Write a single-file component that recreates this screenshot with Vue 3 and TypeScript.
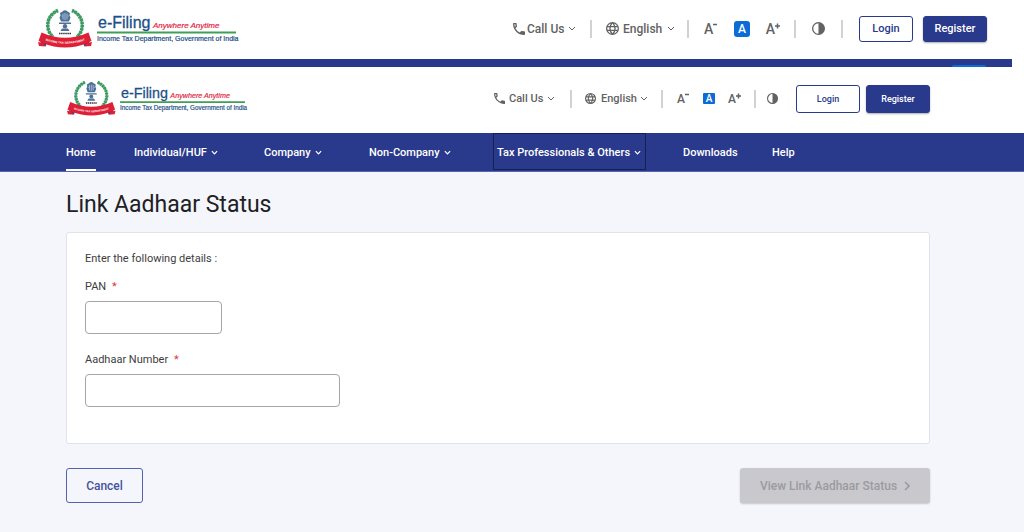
<script setup lang="ts">
import { ref } from 'vue'

interface Masthead {
  id: string
  variant: 'large' | 'compact'
}

interface NavItem {
  label: string
  menu?: boolean
  active?: boolean
  focused?: boolean
}

const mastheads: Masthead[] = [
  { id: 'top', variant: 'large' },
  { id: 'main', variant: 'compact' },
]

const navItems: NavItem[] = [
  { label: 'Home', active: true },
  { label: 'Individual/HUF', menu: true },
  { label: 'Company', menu: true },
  { label: 'Non-Company', menu: true },
  { label: 'Tax Professionals & Others', menu: true, focused: true },
  { label: 'Downloads' },
  { label: 'Help' },
]

const pan = ref('')
const aadhaar = ref('')
</script>

<template>
  <div class="page">
    <template v-for="m in mastheads" :key="m.id">
      <header class="masthead" :class="m.variant">
        <a class="logo" href="#" aria-label="e-Filing home">
          <svg viewBox="0 0 198 39">
            <g fill="none" stroke="#3f9a63">
              <path d="M20 1.5A16.500 16 0 0 0 15 28" stroke-width="3.600" stroke-dasharray="2.400 .7" />
              <path d="M34 1.500A16.500 16 0 0 1 39 28" stroke-width="3.600" stroke-dasharray="2.400 .7" />
              <path d="M20 1.500A16.500 16 0 0 0 15 28M34 1.500A16.500 16 0 0 1 39 28" stroke-width="1.400" />
            </g>
            <g fill="#4d6f98">
              <path d="M24.500 2.500q2.500-2.500 5 0l2.500 1.500-.5 2.500 1 2-1.500 4h-8l-1.500-4 1-2-.5-2.500z" />
              <path d="M21 13.500h12v1.500H21zM24 19.500h6l1.500 2.500h-9z" />
              <circle cx="27" cy="17.300" r="2.200" />
            </g>
            <path d="M25 4.500v6M27 4v7M29 4.500v6M23.500 7h1M30 7h1" stroke="#d5e0eb" stroke-width=".7" />
            <path d="M21 24.500h12" stroke="#333" stroke-width="1.500" stroke-dasharray="1.500 .6" />
            <path d="M2 29l7 3-1 5-5-1zM52 29l-7 3 1 5 5-1z" fill="#234b92" />
            <path d="M3.500 23.500Q27 34 50.500 23.500L53.500 32q-2 .5-4 2Q27 43 4.500 34 2.500 32.500.5 32z" fill="#df1f36" />
            <path d="M0 33l5 1 3 3.500-7-.5zM54 33l-5 1-3 3.500 7-.5z" fill="#df1f36" />
            <path :id="`ribbon-${m.id}`" d="M4.500 30.500Q27 39 50 30.500" fill="none" />
            <text class="ribbon"><textPath :href="`#ribbon-${m.id}`" startOffset="50%" text-anchor="middle">INCOME TAX DEPARTMENT</textPath></text>
            <text class="brand" x="60" y="19">e-Filing</text>
            <text class="motto" x="115" y="19">Anywhere Anytime</text>
            <path d="M59 23.500h139" stroke="#3f9f55" stroke-width="1.800" />
            <text class="department" x="59" y="32">Income Tax Department, Government of India</text>
          </svg>
        </a>

        <div class="tools">
          <div class="cell call">
            <button type="button" class="plain">
              <svg class="icon" viewBox="3 3 18 18"><path fill="currentColor" d="M6.540 5c.06.89.21 1.760.45 2.590L5.790 8.790C5.380 7.590 5.120 6.320 5.030 5zM20 15.500c-1.250 0-2.450-.2-3.570-.57a1 1 0 0 0-1.020.24l-2.200 2.200a15.050 15.050 0 0 1-6.590-6.590l2.200-2.200a1 1 0 0 0 .25-1.020A11.400 11.400 0 0 1 8.500 4a1 1 0 0 0-1-1H4a1 1 0 0 0-1 1c0 9.390 7.610 17 17 17a1 1 0 0 0 1-1v-3.500a1 1 0 0 0-1-1z" /></svg>
              <span class="caption">Call Us</span>
              <svg class="chevron" viewBox="0 0 8 5"><path d="M1 1l3 3 3-3" /></svg>
            </button>
          </div>
          <div class="cell language">
            <svg class="icon" viewBox="2 2 20 20"><path fill="none" stroke="currentColor" stroke-width="2" d="M12 3a9 9 0 1 0 0 18 9 9 0 0 0 0-18zM12 3c-5.300 5-5.300 13 0 18 5.300-5 5.300-13 0-18zM4 9h16M4 15h16" /></svg>
            <select class="caption" aria-label="Language"><option>English</option></select>
            <svg class="chevron" viewBox="0 0 8 5"><path d="M1 1l3 3 3-3" /></svg>
          </div>
          <div class="cell sizes">
            <button type="button" class="plain letter" aria-label="Decrease text size">A<svg viewBox="0 0 5 12"><path d="M0 1.500h4" /></svg></button>
            <button type="button" class="plain current" aria-label="Normal text size">A</button>
            <button type="button" class="plain letter" aria-label="Increase text size">A<svg viewBox="0 0 5 12"><path d="M0 3h5M2.500 .5v5" /></svg></button>
          </div>
          <div class="cell contrast">
            <button type="button" class="plain" aria-label="Contrast">
              <svg class="icon" viewBox="2 2 20 20"><circle cx="12" cy="12" r="9" fill="none" stroke="currentColor" stroke-width="2" /><path fill="currentColor" d="M12 3a9 9 0 0 1 0 18z" /></svg>
            </button>
          </div>
          <div class="cell account">
            <button type="button" class="login">Login</button>
            <button type="button" class="register">Register</button>
          </div>
        </div>
      </header>
      <div v-if="m.variant === 'large'" class="strip"><span></span></div>
    </template>

    <nav class="nav">
      <a v-for="item in navItems" :key="item.label" href="#" :class="{ active: item.active, focused: item.focused }">
        {{ item.label }}
        <svg v-if="item.menu" class="chevron" viewBox="0 0 8 5"><path d="M1 1l3 3 3-3" /></svg>
      </a>
    </nav>

    <main>
      <h1>Link Aadhaar Status</h1>
      <form @submit.prevent>
        <section class="card">
          <p>Enter the following details :</p>
          <label for="pan">PAN <span class="star">*</span></label>
          <input id="pan" v-model="pan" type="text" maxlength="10" required />
          <label for="aadhaar">Aadhaar Number <span class="star">*</span></label>
          <input id="aadhaar" v-model="aadhaar" type="text" maxlength="12" required />
        </section>
        <div class="actions">
          <button type="button" class="cancel">Cancel</button>
          <button type="submit" class="view" disabled>
            View Link Aadhaar Status
            <svg viewBox="0 0 6 10"><path d="M1 1l4 4-4 4" /></svg>
          </button>
        </div>
      </form>
    </main>
  </div>
</template>

<style>
body {
  margin: 0;
  background: #f5f6fb;
}
</style>

<style scoped>
.page {
  min-height: 100vh;
  box-sizing: border-box;
  font-family: Roboto, "Liberation Sans", sans-serif;
  color: #3d3d3d;
}
button, select, input { font: inherit; }
button { cursor: pointer; }
.masthead {
  display: flex;
  align-items: center;
  justify-content: space-between;
  background: #fff;
  color: #626262;
}
.large { padding: 9px 37px 11px 38px; }
.compact { padding: 14px 94px 17px 67px; }
.logo { display: block; width: 198px; }
.compact .logo { width: 178px; }
.logo svg { display: block; width: 100%; overflow: visible; }
.ribbon { font: bold 3px "Liberation Sans", Arial, sans-serif; fill: #fff; }
.brand { font: 16px "Liberation Sans", Arial, sans-serif; fill: #1d5088; stroke: #1d5088; stroke-width: .3; }
.motto { font: italic 8px "Liberation Sans", Arial, sans-serif; fill: #e32440; stroke: #e32440; stroke-width: .2; }
.department { font: 7px "Liberation Sans", Arial, sans-serif; fill: #1d5088; stroke: #1d5088; stroke-width: .2; }

.tools { display: grid; align-items: center; }
.large .tools { grid-template-columns: 77px 97px 107px 47px 146px; }
.compact .tools { grid-template-columns: 76px 91px 93px 42px 134px; }
.cell {
  display: flex;
  align-items: center;
  height: 18px;
  box-sizing: border-box;
  border-left: 2px solid #d2d2d2;
}
.call, .compact .account { border-left: 0; }
.plain {
  display: flex;
  align-items: center;
  padding: 0;
  border: 0;
  background: none;
  color: inherit;
}
.icon { width: 12px; height: 12px; flex: none; }
.chevron { width: 8px; height: 5px; flex: none; fill: none; stroke: currentColor; stroke-width: 1; }
.caption { font-size: 12px; line-height: 16px; font-weight: 500; }
select {
  appearance: none;
  padding: 0;
  border: 0;
  background: none;
  color: inherit;
}
.large .call .plain { gap: 2px; }
.large .call .chevron { margin-left: 2px; }
.large .language { padding-left: 14px; gap: 4px; }
.large .contrast .icon, .large .language .icon { width: 13px; height: 13px; }
.compact .caption { font-size: 11px; }
.compact .icon { width: 11px; height: 11px; }
.compact .call .plain { gap: 4px; }
.compact .language { padding-left: 13px; gap: 5px; }
.compact .language .chevron { margin-left: -2px; }
.sizes { justify-content: space-between; }
.large .sizes { padding: 0 14px 0 15px; }
.compact .sizes { padding: 0 13px 0 14px; }
.letter { font-size: 14px; line-height: 16px; font-weight: 500; }
.letter svg { width: 5px; height: 12px; fill: none; stroke: currentColor; stroke-width: 1.5; }
.current {
  justify-content: center;
  width: 16px;
  height: 16px;
  border-radius: 3px;
  background: #0b6cd6;
  color: #fff;
  font-size: 12px;
  font-weight: 500;
}
.compact .letter { font-size: 12px; }
.compact .current { width: 12px; height: 11px; border-radius: 1px; font-size: 10px; }
.large .contrast { padding-left: 16px; }
.compact .contrast { padding-left: 11px; }
.account { justify-content: flex-end; gap: 10px; }
.compact .account { gap: 6px; }
.login, .register {
  width: 64px;
  height: 28px;
  padding: 0;
  border: 1px solid #29398c;
  border-radius: 3px;
  background: #fff;
  color: #29398c;
  font-size: 11px;
  font-weight: 500;
}
.large .login { width: 54px; height: 26px; }
.large .register { height: 26px; }
.register { background: #29398c; color: #fff; box-shadow: 0 1px 2px #0005; }
.compact .login, .compact .register { font-size: 9px; }

.strip {
  display: flex;
  align-items: flex-end;
  justify-content: flex-end;
  height: 8px;
  margin-right: 12px;
  background: #29398c;
  box-shadow: 12px 0 #fff;
}
.strip span { width: 34px; height: 2px; margin-right: 26px; border-radius: 3px 3px 0 0; background: #0b6cd6; }

.nav {
  display: grid;
  grid-template-columns: 68px 130px 105px 124px 190px 89px auto;
  height: 38px;
  padding-left: 66px;
  border-bottom: 1px solid #5965a8;
  background: #29398c;
}
.nav a {
  display: flex;
  align-items: center;
  justify-self: start;
  gap: 4px;
  height: 38px;
  box-sizing: border-box;
  padding-top: 1px;
  color: #fff;
  font-size: 11px;
  font-weight: 500;
  text-decoration: none;
  white-space: nowrap;
}
.nav .chevron { width: 7px; stroke-width: 1.4; }
.nav .active { border-bottom: 2px solid #fff; padding-top: 3px; }
.nav .focused { height: 37px; width: 153px; padding-left: 3px; border: 1px solid #17204f; }

main { padding: 17px 94px 29px 66px; }
h1 {
  margin: 0 0 12px;
  color: #202124;
  font-size: 23px;
  line-height: 31px;
  font-weight: 400;
}
.card {
  display: flex;
  flex-direction: column;
  align-items: flex-start;
  padding: 18px 18px 36px;
  border: 1px solid #e0e2ee;
  border-radius: 3px;
  background: #fff;
  font-size: 11px;
  line-height: 16px;
}
.card p { margin: 0 0 12px; }
.star { margin-left: 3px; color: #d83a3a; }
.card input {
  width: 255px;
  max-width: 100%;
  height: 33px;
  margin-top: 6px;
  box-sizing: border-box;
  padding: 0 8px;
  border: 1px solid #a6a6a6;
  border-radius: 4px;
  background: #fff;
}
.card #pan { width: 137px; margin-bottom: 18px; }
.actions { display: flex; justify-content: space-between; margin-top: 24px; }
.actions button {
  height: 35px;
  border-radius: 3px;
  font-size: 12px;
  font-weight: 500;
}
.cancel { width: 77px; border: 1px solid #5262ad; background: transparent; color: #4553a0; }
.view {
  display: flex;
  align-items: center;
  justify-content: center;
  gap: 7px;
  width: 190px;
  padding: 0;
  border: 0;
  background: #c9c8cd;
  color: #9b9b9f;
  box-shadow: 0 1px 2px #0003;
}
.view svg { width: 6px; height: 10px; fill: none; stroke: currentColor; stroke-width: 1.6; }
</style>
